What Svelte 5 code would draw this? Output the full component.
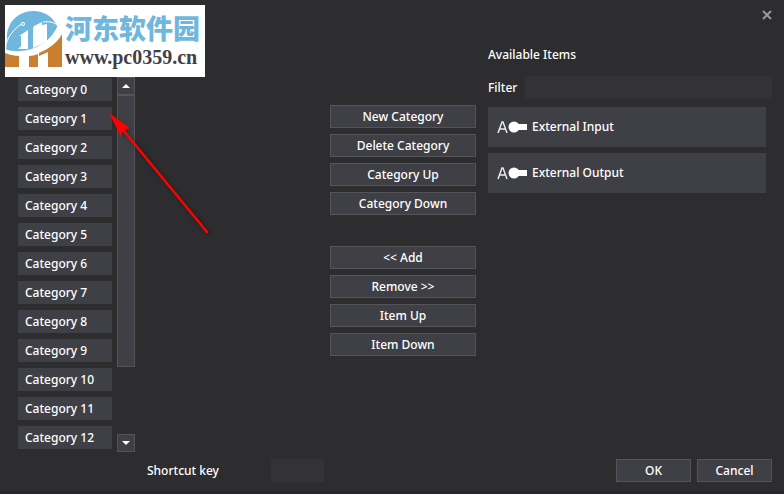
<script lang="ts">
	interface Item {
		id: string;
		name: string;
	}

	let categories = $state(Array.from({ length: 13 }, (_, i) => `Category ${i}`));
	let selected = $state(0);
	let filter = $state('');
	let shortcut = $state('');

	const items: Item[] = [
		{ id: 'input', name: 'External Input' },
		{ id: 'output', name: 'External Output' }
	];

	let visibleItems = $derived(
		items.filter((item) => item.name.toLowerCase().includes(filter.toLowerCase()))
	);

	function addCategory() {
		categories.push(`Category ${categories.length}`);
	}

	function deleteCategory() {
		categories.splice(selected, 1);
		selected = Math.max(0, selected - 1);
	}

	function moveCategory(step: number) {
		const target = selected + step;
		if (target < 0 || target >= categories.length) return;
		const [moved] = categories.splice(selected, 1);
		categories.splice(target, 0, moved);
		selected = target;
	}
</script>

<div class="dialog">
	<div class="watermark">
		<svg class="logo" viewBox="0 0 58 62" aria-hidden="true">
			<path fill="#70b7de" d="M2 34C1 18 13 6 28 6c12 0 22 7 25 17 1 10-8 18-17 22-11 5-25 6-35 1z" />
			<path fill="none" stroke="#fff" stroke-width="1" d="M1 39c3-9 9-16 17-21M38 17c8-1 14 1 15 5" />
			<path fill="#fff" d="M0 44c15 6 42 0 52-22 2-2 5 1 5 4-9 20-36 31-57 25z" />
			<path fill="#fff" d="M14 31l9-6v19H13l3-3V31zM29 21l8-4v22l-9 4V23z" />
			<path fill="#fff" d="M37 20l5-1v17l-5 3z" />
			<circle cx="18" cy="19" r="2" fill="#fff" />
			<circle cx="18" cy="19" r="1" fill="#70b7de" />
			<path
				fill="#c97f30"
				d="M0 48c5 2 10 3 14 3v11H0zM24 51c3 0 6-1 9-2v13h-9zM34 48c10-4 19-11 23-19v33H43V47l-9 4z"
			/>
		</svg>
		<div class="brand">
			<span class="brand-name">河东软件园</span>
			<span class="brand-url">www.pc0359.cn</span>
		</div>
	</div>

	<header>
		<button class="close" aria-label="Close">
			<svg viewBox="0 0 10 10" aria-hidden="true">
				<path d="M1 1l8 8M9 1l-8 8" stroke="#999" stroke-width="2" />
			</svg>
		</button>
	</header>

	<main>
		<section class="categories">
			<ul>
				{#each categories as category, i}
					<li>
						<button class="category" onclick={() => (selected = i)}>{category}</button>
					</li>
				{/each}
			</ul>
			<div class="scrollbar">
				<button class="scroll-btn" aria-label="Scroll up">
					<svg viewBox="0 0 8 4" aria-hidden="true"><path d="M0 4l4-4 4 4z" fill="#fff" /></svg>
				</button>
				<div class="thumb"></div>
				<div class="track"></div>
				<button class="scroll-btn" aria-label="Scroll down">
					<svg viewBox="0 0 8 4" aria-hidden="true"><path d="M0 0l4 4 4-4z" fill="#fff" /></svg>
				</button>
			</div>
		</section>

		<section class="actions">
			<div class="group">
				<button class="btn" onclick={addCategory}>New Category</button>
				<button class="btn" onclick={deleteCategory}>Delete Category</button>
				<button class="btn" onclick={() => moveCategory(-1)}>Category Up</button>
				<button class="btn" onclick={() => moveCategory(1)}>Category Down</button>
			</div>
			<div class="group">
				<button class="btn">&lt;&lt; Add</button>
				<button class="btn">Remove &gt;&gt;</button>
				<button class="btn">Item Up</button>
				<button class="btn">Item Down</button>
			</div>
		</section>

		<section class="available">
			<h2>Available Items</h2>
			<div class="filter">
				<label for="filter">Filter</label>
				<input id="filter" type="text" bind:value={filter} />
			</div>
			<ul class="items">
				{#each visibleItems as item (item.id)}
					<li>
						<button class="item">
							<svg viewBox="0 0 32 14" aria-hidden="true">
								<path
									d="M2 13L6 2h1l4 11M3 9h7"
									fill="none"
									stroke="#eee"
									stroke-width="1.400"
								/>
								<circle cx="18" cy="7" r="5.500" fill="#fff" />
								<path d="M20 4h11v6H20z" fill="#fff" />
							</svg>
							<span>{item.name}</span>
						</button>
					</li>
				{/each}
			</ul>
		</section>
	</main>

	<footer>
		<div class="shortcut">
			<label for="shortcut">Shortcut key</label>
			<input id="shortcut" type="text" bind:value={shortcut} />
		</div>
		<div class="confirm">
			<button class="btn">OK</button>
			<button class="btn">Cancel</button>
		</div>
	</footer>

	<svg class="pointer" viewBox="0 0 110 130" aria-hidden="true">
		<g class="shadow" transform="translate(2 2)">
			<path d="M18 20L103 123" stroke="#000" stroke-width="3" />
			<path d="M4 3l20 15-5 2-3 6z" fill="#000" />
		</g>
		<path d="M18 20L102 122" stroke="#f00" stroke-width="2.500" stroke-linecap="round" />
		<path d="M4 3l21 15-7 2-2 7z" fill="#f00" />
	</svg>
</div>

<style>
	:global(body) {
		margin: 0;
		background: #2d2d30;
	}

	.dialog {
		position: relative;
		box-sizing: border-box;
		min-height: 100vh;
		padding: 0 12px 9px 18px;
		background: #2d2d30;
		border-bottom: 3px solid #2a2430;
		color: #fff;
		font-family: 'Noto Sans', 'Noto Sans CJK SC', sans-serif;
		font-size: 12px;
		font-weight: 500;
		line-height: 16px;
	}

	button,
	input {
		box-sizing: border-box;
		margin: 0;
		padding: 0;
		border: none;
		border-radius: 0;
		color: inherit;
		font: inherit;
	}

	button {
		cursor: pointer;
	}

	ul {
		margin: 0;
		padding: 0;
		list-style: none;
	}

	input {
		height: 23px;
		padding: 0 6px;
		background: #333337;
	}

	.btn {
		height: 23px;
		background: #3f3f46;
		border: 1px solid #555558;
	}

	.btn:hover,
	.category:hover,
	.item:hover {
		background: #4c4c54;
	}

	header {
		display: flex;
		justify-content: flex-end;
		height: 46px;
	}

	.close {
		width: 10px;
		height: 10px;
		margin-top: 10px;
		background: none;
	}

	.close svg {
		display: block;
	}

	main {
		display: grid;
		grid-template-columns: 117px minmax(146px, 1fr) 284px;
		gap: 12px;
	}

	.categories {
		display: flex;
		gap: 5px;
		padding-top: 31px;
	}

	.categories ul {
		display: flex;
		flex: 1;
		flex-direction: column;
		gap: 6px;
		padding: 1px 0 3px;
	}

	.category {
		display: block;
		width: 100%;
		height: 23px;
		padding: 0 7px;
		background: #3f3f46;
		text-align: left;
	}

	.scrollbar {
		display: flex;
		flex-direction: column;
		width: 18px;
	}

	.scroll-btn {
		display: flex;
		align-items: center;
		justify-content: center;
		height: 18px;
		background: #3f3f46;
		border: 1px solid #555558;
	}

	.scroll-btn svg {
		width: 8px;
		height: 4px;
	}

	.thumb {
		flex: 4;
		background: #3f3f46;
		border: 1px solid #555558;
	}

	.track {
		flex: 1;
	}

	.actions {
		display: flex;
		flex-direction: column;
		align-items: flex-end;
		gap: 31px;
		padding-top: 59px;
	}

	.group {
		display: flex;
		flex-direction: column;
		gap: 6px;
		width: 146px;
	}

	h2 {
		margin: 0;
		font-size: 12px;
		font-weight: 500;
		line-height: 18px;
	}

	.filter {
		display: flex;
		align-items: center;
		gap: 8px;
		margin: 12px 0 8px;
	}

	.filter input {
		flex: 1;
		min-width: 0;
	}

	.items {
		display: flex;
		flex-direction: column;
		gap: 6px;
		padding-right: 6px;
	}

	.item {
		display: flex;
		align-items: center;
		gap: 4px;
		width: 100%;
		height: 40px;
		padding: 0 8px;
		background: #3f3f46;
	}

	.item svg {
		width: 32px;
		height: 14px;
	}

	footer {
		display: flex;
		align-items: center;
		justify-content: space-between;
		margin-top: 7px;
		padding-left: 129px;
	}

	.shortcut {
		display: flex;
		align-items: center;
		justify-content: space-between;
		width: 177px;
	}

	.shortcut input {
		width: 53px;
	}

	.confirm {
		display: flex;
		gap: 6px;
	}

	.confirm .btn {
		width: 75px;
	}

	.watermark {
		position: absolute;
		top: 5px;
		left: 5px;
		z-index: 1;
		display: flex;
		gap: 2px;
		width: 200px;
		height: 72px;
		background: #fff;
	}

	.logo {
		flex: none;
		width: 58px;
		height: 62px;
	}

	.brand {
		display: flex;
		flex-direction: column;
		padding-top: 7px;
		white-space: nowrap;
	}

	.brand-name {
		color: #70b7de;
		font-family: 'Noto Sans CJK SC', sans-serif;
		font-size: 27px;
		font-weight: 900;
		line-height: 32px;
	}

	.brand-url {
		color: #3f3f46;
		font-family: 'Liberation Serif', serif;
		font-size: 20px;
		font-weight: 700;
		line-height: 26px;
	}

	.pointer {
		position: absolute;
		top: 110px;
		left: 105px;
		width: 110px;
		height: 130px;
		pointer-events: none;
	}

	.shadow {
		opacity: 0.3;
		filter: blur(2px);
	}
</style>
